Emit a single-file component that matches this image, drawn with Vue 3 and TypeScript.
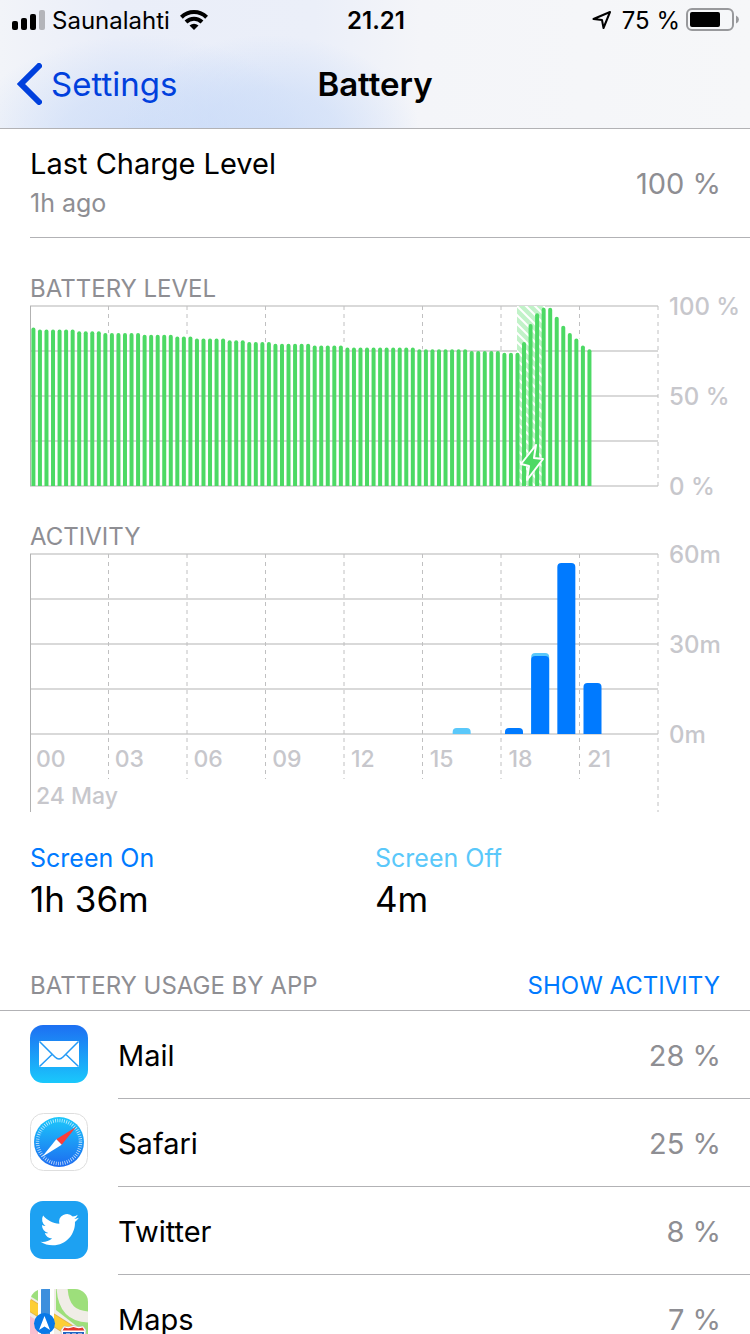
<script setup lang="ts">
interface Run {
  level: number
  count: number
}

interface Activity {
  hour: number
  on: number
  off: number
}

const levelRuns: Run[] = [
  { level: 88, count: 1 }, { level: 87, count: 6 }, { level: 86, count: 4 },
  { level: 85, count: 6 }, { level: 84, count: 5 }, { level: 83, count: 3 },
  { level: 82, count: 5 }, { level: 81, count: 3 }, { level: 80, count: 4 },
  { level: 79, count: 6 }, { level: 78, count: 5 }, { level: 77, count: 11 },
  { level: 76, count: 8 }, { level: 75, count: 5 }, { level: 74, count: 3 },
  { level: 80, count: 1 }, { level: 90, count: 1 }, { level: 96, count: 1 },
  { level: 99, count: 2 }, { level: 94, count: 1 }, { level: 89, count: 1 },
  { level: 85, count: 1 }, { level: 82, count: 1 }, { level: 78, count: 1 },
  { level: 76, count: 1 },
]
const levels: number[] = levelRuns.flatMap((r) => Array<number>(r.count).fill(r.level))

const activity: Activity[] = [
  { hour: 16, on: 0, off: 2 },
  { hour: 18, on: 2, off: 0 },
  { hour: 19, on: 26, off: 1 },
  { hour: 20, on: 57, off: 0 },
  { hour: 21, on: 17, off: 0 },
]

const slot = 628 / 96
const hourWidth = 628 / 24
const hours = ['00', '03', '06', '09', '12', '15', '18', '21']
const rows = [0, 1, 2, 3, 4]
const innerColumns = [1, 2, 3, 4, 5, 6, 7]

// Bar with rounded top corners standing on the baseline at y = 181.
function barPath(x: number, width: number, height: number, radius: number): string {
  const top = 181 - height
  return `M${x} 181V${top + radius}q0 ${-radius} ${radius} ${-radius}h${width - 2 * radius}q${radius} 0 ${radius} ${radius}V181z`
}

// The three-hour dashes of the level chart stop at the bars.
function dashEnd(column: number): number {
  return 181 - levels[column * 12 - 1] * 1.8
}

const apps = [
  { name: 'Mail', share: '28 %' },
  { name: 'Safari', share: '25 %' },
  { name: 'Twitter', share: '8 %' },
  { name: 'Maps', share: '7 %' },
]
</script>

<template>
  <div class="screen">
    <header class="top">
      <div class="status">
        <div class="status-side">
          <svg class="signal" width="34" height="20" viewBox="0 0 34 20" aria-hidden="true">
            <rect x="0" y="11" width="6" height="9" rx="2" />
            <rect x="9" y="8" width="6" height="12" rx="2" />
            <rect x="18" y="4" width="6" height="16" rx="2" />
            <rect x="27" y="0" width="6" height="20" rx="2" fill="#b4b5ba" />
          </svg>
          <span>Saunalahti</span>
          <svg class="wifi" width="28" height="20" viewBox="0 0 28 20" aria-hidden="true">
            <g fill="none" stroke="#000" stroke-width="4">
              <path d="M1.400 7.200a18 18 0 0 1 25.200 0" />
              <path d="M6 12a11.500 11.500 0 0 1 16 0" />
            </g>
            <path d="M14 20l-4.500-4.600q4.500-3.400 9 0z" />
          </svg>
        </div>
        <span class="clock">21.21</span>
        <div class="status-side right">
          <svg class="locate" width="20" height="20" viewBox="0 0 20 20" aria-hidden="true">
            <path d="M1.500 9L18 2L11.500 18L10 10z" fill="none" stroke="#000" stroke-width="2" stroke-linejoin="round" />
          </svg>
          <span>75 %</span>
          <svg class="cell" width="54" height="24" viewBox="0 0 54 24" aria-hidden="true">
            <rect x="1" y="1" width="46" height="21" rx="5" fill="none" stroke="#98999c" stroke-width="2" />
            <rect x="4" y="4" width="30" height="15" rx="2" />
            <path d="M50 7.500q3 1.500 3 4t-3 4z" fill="#98999c" />
          </svg>
        </div>
      </div>
      <nav class="nav">
        <a class="back" href="#">
          <svg width="25" height="42" viewBox="0 0 25 42" aria-hidden="true">
            <path d="M22 3L4 21L22 39" fill="none" stroke="#0040dd" stroke-width="6" stroke-linecap="round" stroke-linejoin="miter" />
          </svg>
          <span>Settings</span>
        </a>
        <h1>Battery</h1>
      </nav>
    </header>

    <main>
      <section class="charge">
        <div>
          <h2>Last Charge Level</h2>
          <p>1h ago</p>
        </div>
        <span class="amount">100 %</span>
      </section>

      <section class="chart level">
        <h3>BATTERY LEVEL</h3>
        <div class="plot">
          <svg class="graph" viewBox="0 0 630 182" role="img" aria-label="Battery level">
            <defs>
              <pattern id="hatch" width="9" height="9" patternUnits="userSpaceOnUse">
                <rect width="9" height="9" fill="#c1f2c8" />
                <path d="M-2 -2L11 11M-2 7L2 11M7 -2L11 2" stroke="#fff" stroke-width="2" />
              </pattern>
            </defs>
            <path v-for="r in rows" :key="r" :d="`M0 ${1 + r * 45}H628`" class="rule" />
            <path v-for="c in innerColumns" :key="c" :d="`M${c * 78.5} 1V${dashEnd(c)}`" class="dash" />
            <path d="M0.500 1V181" class="edge" />
            <path d="M628 1V181" class="dash" />
            <rect x="487" y="1" width="28" height="180" fill="url(#hatch)" />
            <path v-for="(v, i) in levels" :key="i" :d="barPath(1.4 + i * slot, 4, v * 1.8, 2)" fill="#4cd964" />
            <path d="M506 140L491 159L499 161L497 175L513 154L504 153z" fill="#4cd964" stroke="#fff" stroke-width="2" stroke-linejoin="round" />
          </svg>
          <div class="scale">
            <span>100 %</span>
            <span>50 %</span>
            <span>0 %</span>
          </div>
        </div>
      </section>

      <section class="chart activity">
        <h3>ACTIVITY</h3>
        <div class="plot">
          <div class="graph">
            <svg class="canvas" viewBox="0 0 630 259" role="img" aria-label="Activity">
              <path v-for="r in rows" :key="r" :d="`M0 ${1 + r * 45}H628`" class="rule" />
              <path v-for="c in innerColumns" :key="c" :d="`M${c * 78.5} 1V226`" class="dash" />
              <path d="M0.500 1V259" class="edge" />
              <path d="M628 1V259" class="dash" />
              <g v-for="a in activity" :key="a.hour">
                <path v-if="a.off" :d="barPath(a.hour * hourWidth + 4, 18, (a.on + a.off) * 3, 4)" fill="#5ac8fa" />
                <path v-if="a.on" :d="barPath(a.hour * hourWidth + 4, 18, a.on * 3, 4)" fill="#007aff" />
              </g>
            </svg>
            <div class="axis">
              <div class="hours">
                <span v-for="h in hours" :key="h">{{ h }}</span>
              </div>
              <div class="day">24 May</div>
            </div>
          </div>
          <div class="scale">
            <span>60m</span>
            <span>30m</span>
            <span>0m</span>
          </div>
        </div>
      </section>

      <section class="totals">
        <div>
          <h4 class="on">Screen On</h4>
          <p>1h 36m</p>
        </div>
        <div>
          <h4 class="off">Screen Off</h4>
          <p>4m</p>
        </div>
      </section>

      <section class="usage">
        <div class="usage-head">
          <h3>BATTERY USAGE BY APP</h3>
          <button type="button">SHOW ACTIVITY</button>
        </div>
        <ul>
          <li v-for="app in apps" :key="app.name">
            <svg v-if="app.name === 'Mail'" class="icon" viewBox="0 0 58 58" aria-hidden="true">
              <defs>
                <linearGradient id="mail" x2="0" y2="1">
                  <stop offset="0" stop-color="#1d6ff2" />
                  <stop offset="1" stop-color="#1ac8fc" />
                </linearGradient>
              </defs>
              <rect width="58" height="58" rx="13" fill="url(#mail)" />
              <rect x="9" y="16" width="40" height="26" rx="1" fill="#fff" />
              <path d="M9.500 16.500L25 32q4 4 8 0L48.500 16.500M9.500 41.500L22 29.500M48.500 41.500L36 29.500" fill="none" stroke="#239af6" stroke-width="1.500" />
            </svg>
            <svg v-else-if="app.name === 'Safari'" class="icon" viewBox="0 0 58 58" aria-hidden="true">
              <defs>
                <linearGradient id="safari" x2="0" y2="1">
                  <stop offset="0" stop-color="#1cc8fb" />
                  <stop offset="1" stop-color="#1d6bf0" />
                </linearGradient>
              </defs>
              <rect x="0.500" y="0.500" width="57" height="57" rx="13" fill="#fff" stroke="#dedede" />
              <circle cx="29" cy="29" r="25" fill="url(#safari)" />
              <circle cx="29" cy="29" r="21.500" fill="none" stroke="#fff" stroke-opacity="0.750" stroke-width="3.500" stroke-dasharray="0.800 1.450" />
              <path d="M46 14L26.300 26.300L31.700 31.700z" fill="#fc3d39" />
              <path d="M12 44L26.300 26.300L31.700 31.700z" fill="#fff" />
            </svg>
            <svg v-else-if="app.name === 'Twitter'" class="icon" viewBox="0 0 58 58" aria-hidden="true">
              <rect width="58" height="58" rx="13" fill="#1da1f2" />
              <path transform="translate(10.500 9.500) scale(1.600)" fill="#fff" d="M23.950 4.570a10 10 0 0 1-2.820.77 4.960 4.960 0 0 0 2.160-2.720c-.95.550-2 .960-3.130 1.180a4.920 4.920 0 0 0-8.380 4.480C7.690 8.090 4.070 6.130 1.640 3.160a4.920 4.920 0 0 0 1.520 6.570 4.900 4.900 0 0 1-2.230-.61v.06a4.920 4.920 0 0 0 3.950 4.830 5 5 0 0 1-2.210.08 4.940 4.940 0 0 0 4.600 3.420A9.870 9.870 0 0 1 0 19.540a13.990 13.990 0 0 0 7.550 2.210c9.050 0 14-7.500 14-13.980 0-.21 0-.42-.02-.63a9.940 9.940 0 0 0 2.460-2.550z" />
            </svg>
            <svg v-else class="icon" viewBox="0 0 58 58" aria-hidden="true">
              <defs>
                <clipPath id="map-tile"><rect width="58" height="58" rx="13" /></clipPath>
              </defs>
              <g clip-path="url(#map-tile)">
                <rect width="58" height="58" fill="#f0ede7" />
                <path d="M0 0H8V12L0 7z" fill="#9ddf7b" />
                <path d="M0 27L14 36V58H0z" fill="#f9bfd0" />
                <path d="M26 0H58V46L26 21z" fill="#9ddf7b" />
                <path d="M32 -2C33 20 43 28 60 28" fill="none" stroke="#f0ede7" stroke-width="11" />
                <path d="M-2 15L60 54" stroke="#e0b449" stroke-width="12" />
                <path d="M-2 15L60 54" stroke="#fdce35" stroke-width="10" />
                <rect x="8" y="-1" width="16" height="60" fill="#fff" />
                <rect x="11" y="-1" width="9" height="60" fill="#3d8fdd" />
                <circle cx="14.500" cy="34.500" r="10.500" fill="#0879e8" />
                <path d="M14.500 27L20 41L14.500 37.500L9 41z" fill="#fff" />
                <path d="M34 37Q39 38.500 43.500 36.500Q48 38.500 53 37L56 41Q55 47 56 58H31Q32 47 31 41z" fill="#fff" stroke="#a9b0c4" stroke-width="0.500" />
                <path d="M34.500 38.500Q39 40 43.500 38Q48 40 52.500 38.500L54.500 41.500H32.500z" fill="#e5352c" />
                <path d="M33 43H54V58H33z" fill="#2164c4" />
                <path d="M36 45.500H40M42 45.500H46M48 45.500H52" stroke="#fff" stroke-width="2" />
              </g>
            </svg>
            <div class="row">
              <span>{{ app.name }}</span>
              <span class="amount">{{ app.share }}</span>
            </div>
          </li>
        </ul>
      </section>
    </main>
  </div>
</template>

<style>
html,
body {
  background: #fff;
  scrollbar-width: none;
}
</style>

<style scoped>
.screen {
  min-height: 100vh;
  background: #fff;
  color: #000;
  font-family: Inter, "Liberation Sans", sans-serif;
  font-size: 29px;
}

h1,
h2,
h3,
h4,
p,
ul {
  margin: 0;
  padding: 0;
  font-weight: 400;
}

.top {
  border-bottom: 1px solid #b2b2b5;
  background:
    radial-gradient(ellipse 150px 100px at 270px 135px, rgba(203, 220, 248, 0.8) 0%, rgba(203, 220, 248, 0.6) 45%, rgba(203, 220, 248, 0) 100%),
    radial-gradient(ellipse 170px 100px at 140px 135px, rgba(203, 220, 248, 0.8) 0%, rgba(203, 220, 248, 0.6) 45%, rgba(203, 220, 248, 0) 100%),
    linear-gradient(90deg, #f2f4f9 0%, #eaeef9 15%, #ebeff9 42%, #f4f5f9 56%, #f6f7f9 100%);
}

.status {
  display: grid;
  grid-template-columns: 1fr auto 1fr;
  align-items: center;
  height: 40px;
  padding: 0 10px 0 12px;
  font-size: 24px;
}

.status-side {
  display: flex;
  align-items: center;
  gap: 6px;
}

.status-side.right {
  justify-content: flex-end;
}

.wifi {
  margin-left: 4px;
}

.locate {
  margin-right: 4px;
}

.clock {
  font-weight: 600;
}

.nav {
  display: grid;
  grid-template-columns: 1fr auto 1fr;
  align-items: center;
  height: 88px;
  padding: 0 17px;
  font-size: 33px;
}

.back {
  display: flex;
  align-items: center;
  gap: 9px;
  color: #0040dd;
  text-decoration: none;
}

h1 {
  font-size: 33px;
  font-weight: 600;
}

.charge {
  display: flex;
  align-items: center;
  justify-content: space-between;
  height: 108px;
  margin-left: 30px;
  padding-right: 29px;
  border-bottom: 1px solid #b2b2b5;
}

h2 {
  font-size: 29px;
  line-height: 40px;
}

.charge p {
  color: #8e8e93;
  font-size: 25px;
  line-height: 38px;
}

.amount {
  color: #8e8e93;
}

h3 {
  color: #8e8e93;
  font-size: 24px;
  line-height: 32px;
}

.chart {
  padding-left: 30px;
}

.level {
  margin-top: 35px;
}

.activity {
  margin-top: 34px;
}

.plot {
  display: flex;
  align-items: flex-start;
}

.graph {
  display: block;
  flex: 1;
  min-width: 0;
}

.scale {
  display: flex;
  flex-direction: column;
  justify-content: space-between;
  box-sizing: border-box;
  width: 90px;
  height: 212px;
  margin: -14px 0 -16px;
  padding-left: 9px;
  color: #c7c7cc;
  font-size: 24px;
  font-weight: 500;
  line-height: 32px;
  white-space: nowrap;
}

.canvas {
  display: block;
  width: 100%;
}

.rule {
  stroke: #d9d9d9;
  stroke-width: 2;
}

.dash {
  stroke: #c0c0c1;
  stroke-width: 1;
  stroke-dasharray: 4 4;
}

.edge {
  stroke: #b2b2b2;
  stroke-width: 1;
}

.axis {
  height: 78px;
  margin-top: -78px;
  color: #c7c7cc;
  font-size: 23px;
  font-weight: 500;
}

.hours {
  display: grid;
  grid-template-columns: repeat(8, 1fr);
  padding-top: 7px;
  line-height: 37px;
}

.hours span,
.day {
  padding-left: 6px;
}

.day {
  line-height: 37px;
}

.totals {
  display: grid;
  grid-template-columns: 1fr 1fr;
  margin-top: 28px;
  padding: 0 30px;
}

h4 {
  font-size: 25px;
  line-height: 36px;
}

.on {
  color: #007aff;
}

.off {
  color: #5ac8fa;
}

.totals p {
  font-size: 35px;
  line-height: 46px;
}

.usage-head {
  display: flex;
  align-items: center;
  justify-content: space-between;
  height: 48px;
  margin-top: 38px;
  padding: 2px 30px 0;
  border-bottom: 1px solid #b2b2b5;
}

button {
  padding: 0;
  border: 0;
  background: none;
  color: #007aff;
  font: inherit;
  font-size: 24px;
  line-height: 32px;
}

ul {
  list-style: none;
}

li {
  display: flex;
  align-items: center;
  gap: 30px;
  height: 88px;
  padding-left: 30px;
}

.icon {
  flex: none;
  width: 58px;
  height: 58px;
  margin-bottom: 2px;
}

.row {
  display: flex;
  flex: 1;
  align-items: center;
  justify-content: space-between;
  box-sizing: border-box;
  height: 88px;
  padding: 2px 29px 0 0;
  border-bottom: 1px solid #b2b2b5;
}
</style>
